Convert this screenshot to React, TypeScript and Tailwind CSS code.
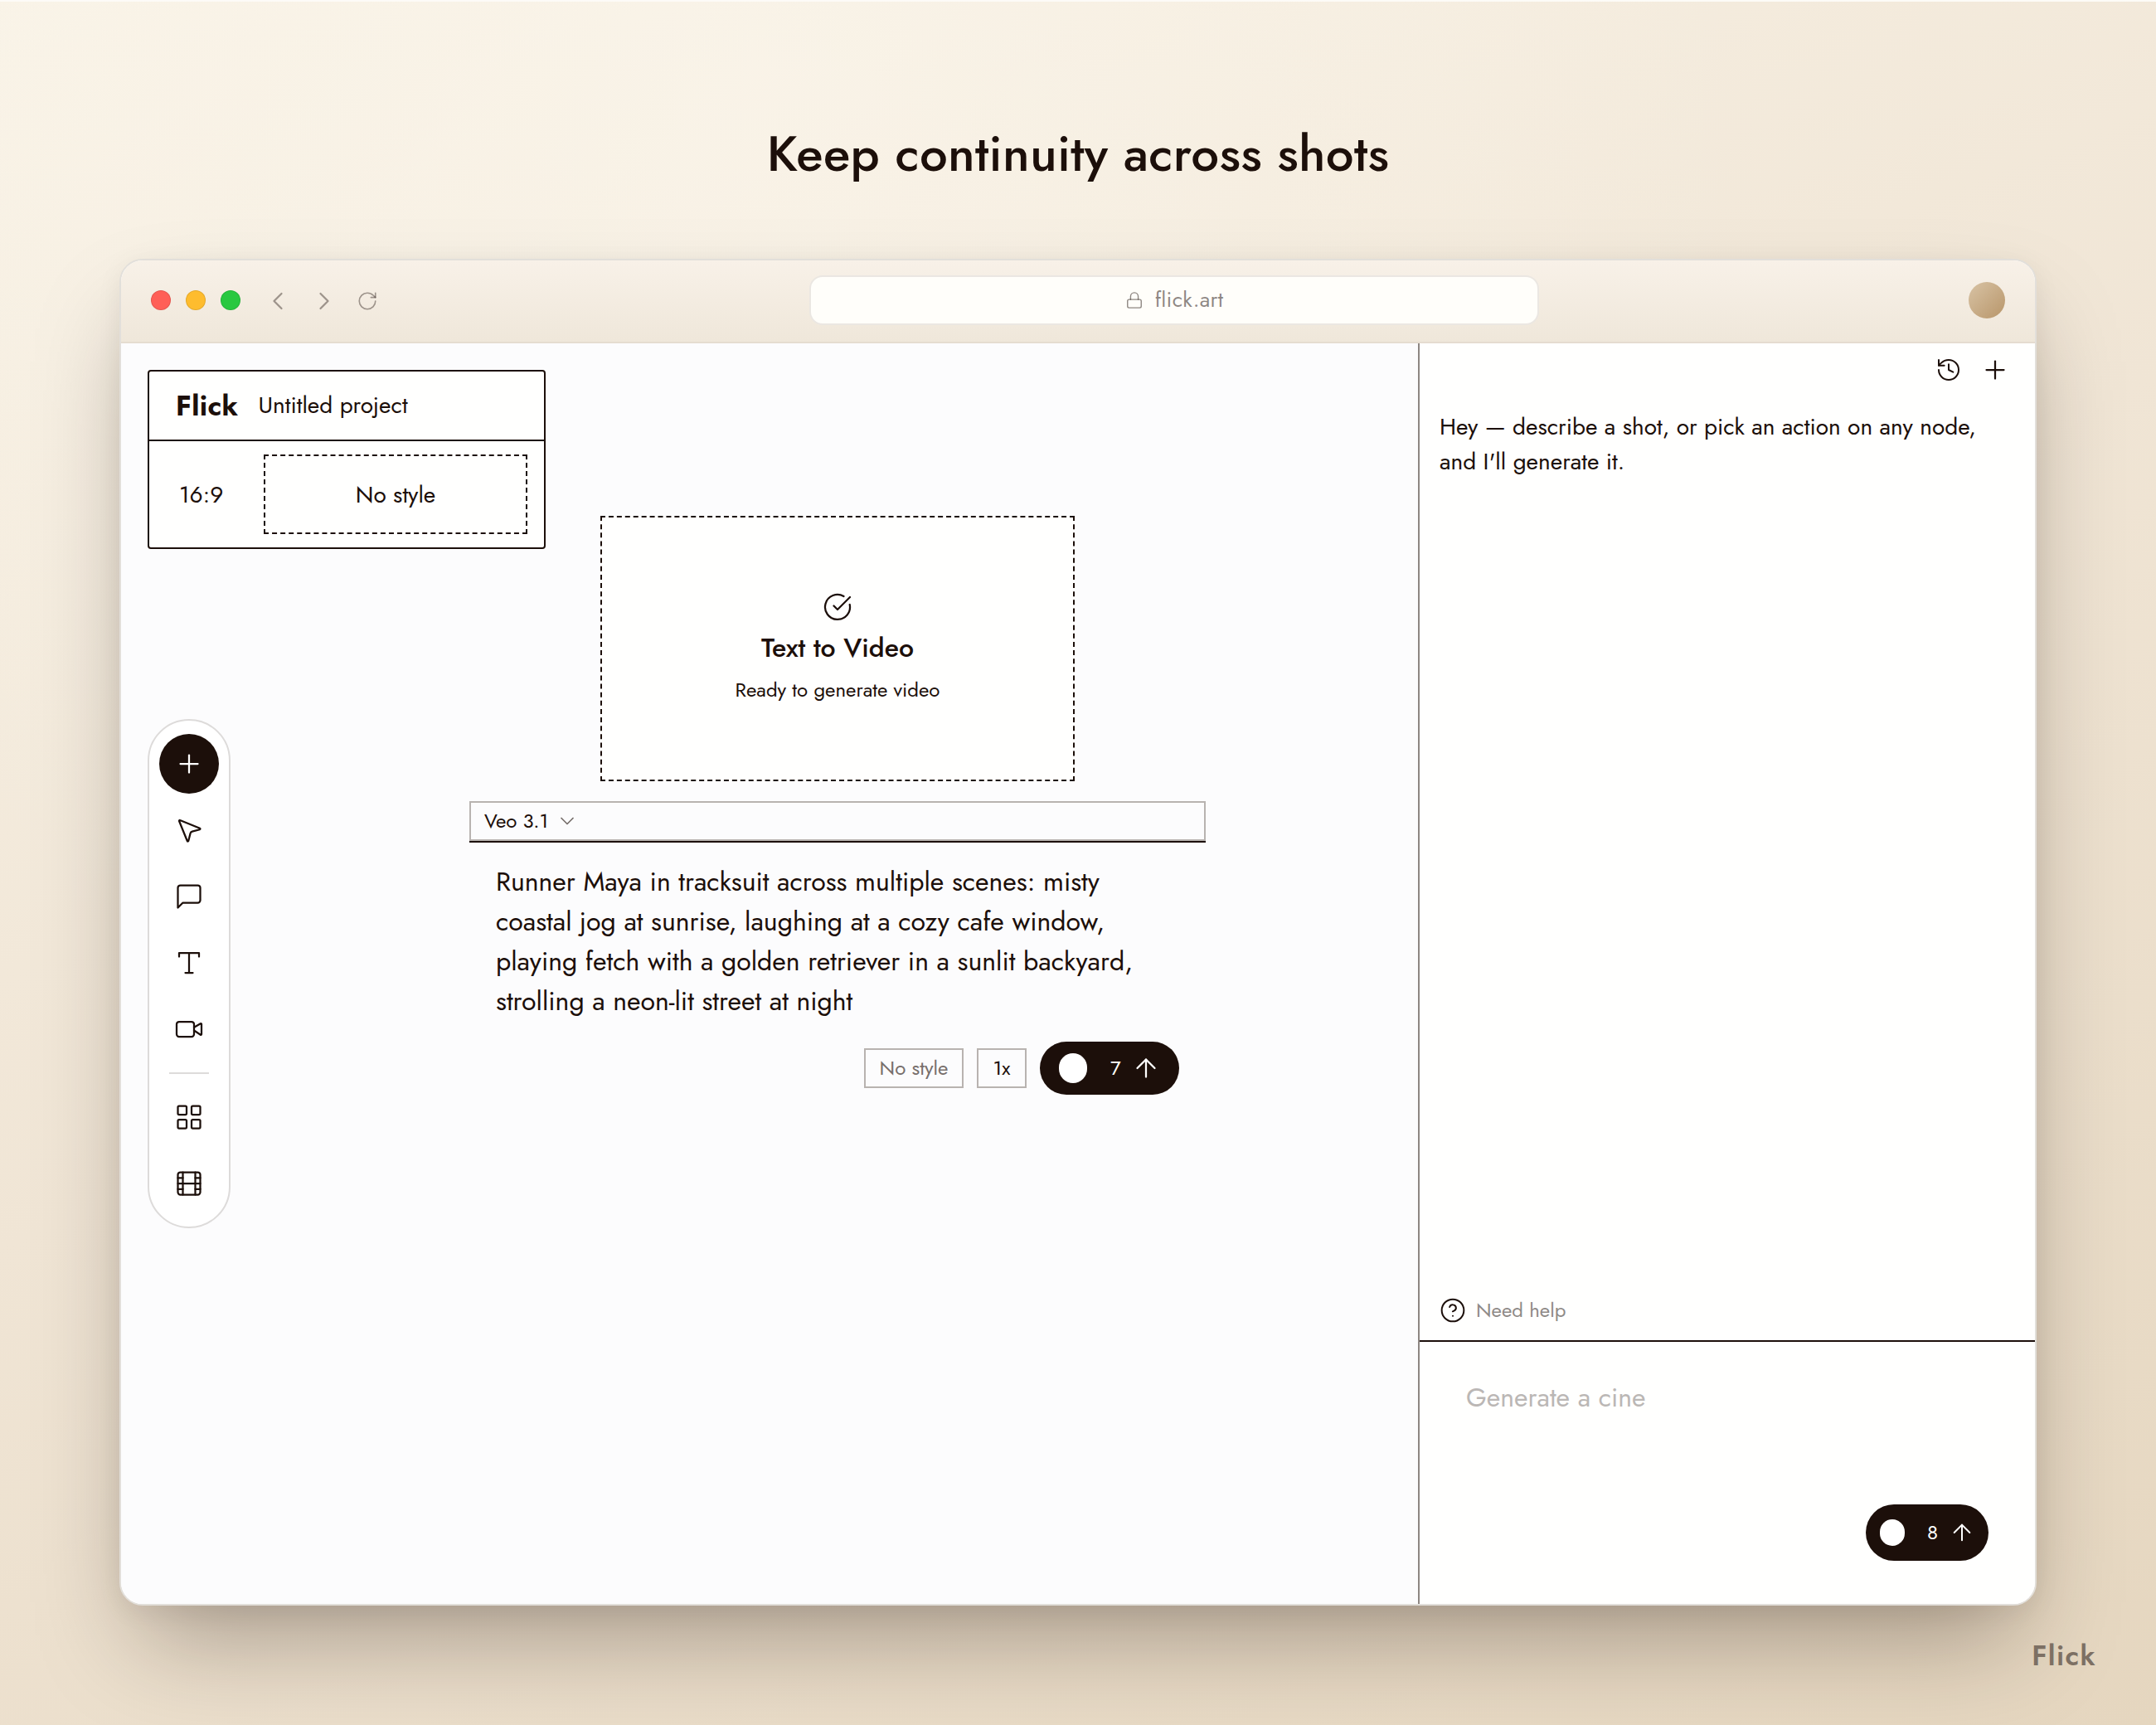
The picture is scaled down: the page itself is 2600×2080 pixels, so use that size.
import { clsx } from 'clsx'
import {
  ArrowUp,
  ChevronDown,
  ChevronLeft,
  ChevronRight,
  CircleCheckBig,
  CircleQuestionMark,
  Film,
  History,
  LayoutGrid,
  Lock,
  MousePointer2,
  Plus,
  RotateCw,
  Video,
} from 'lucide-react'

type IconProps = { size: number; strokeWidth: number }

const StrokeIcon = ({ size, strokeWidth, d }: IconProps & { d: string }) => (
  <svg
    width={size}
    height={size}
    viewBox="0 0 24 24"
    fill="none"
    stroke="currentColor"
    strokeWidth={strokeWidth}
    strokeLinecap="round"
    strokeLinejoin="round"
  >
    <path d={d} />
  </svg>
)

const CommentIcon = (props: IconProps) => (
  <StrokeIcon {...props} d="M21 15a2 2 0 0 1-2 2H7l-4 4V5a2 2 0 0 1 2-2h14a2 2 0 0 1 2 2z" />
)

const TextIcon = (props: IconProps) => <StrokeIcon {...props} d="M4 7V4h16v3M9 20h6M12 4v16" />

const tools = [
  { name: 'select', Icon: MousePointer2 },
  { name: 'comment', Icon: CommentIcon },
  { name: 'text', Icon: TextIcon },
  { name: 'video', Icon: Video },
]

const libraryTools = [
  { name: 'assets', Icon: LayoutGrid },
  { name: 'timeline', Icon: Film },
]

export default function App() {
  return (
    <div className="flex h-[2080px] w-[2600px] flex-col overflow-hidden border-t-2 border-[#fdfbf7] bg-[radial-gradient(ellipse_at_35%_5%,#fbf6ec90_0%,#fbf6ec00_50%),linear-gradient(158deg,#f9f3e7_0%,#f0e5d5_48%,#e5d6bf_100%)] font-[Jost,Lato,sans-serif] text-[#1c0f0a]">
      <h1 className="flex h-[310px] shrink-0 items-center justify-center pt-[57px] text-[60px] font-medium tracking-[0.3px]">
        Keep continuity across shots
      </h1>
      <div className="mx-36 flex h-[1624px] shrink-0 flex-col overflow-hidden rounded-[28px] border-2 border-[#e2dfda] bg-white shadow-[0_60px_120px_-24px_rgba(28,15,10,0.34),0_8px_32px_rgba(28,15,10,0.06)]">
        <TitleBar />
        <div className="flex min-h-0 flex-1">
          <Canvas />
          <ChatPanel />
        </div>
      </div>
      <div className="flex justify-end pt-[35px] pr-[72px] text-[34px] font-semibold tracking-[0.04em] text-[#7d7064]">
        Flick
      </div>
    </div>
  )
}

const TitleBar = () => {
  return (
    <div className="flex h-[100px] shrink-0 items-center border-b-2 border-[#e5dcd0] bg-linear-to-b from-[#f8f1e8] to-[#efe7da] px-9 pb-0.5">
      <div className="flex gap-[18px]">
        <span className="size-6 rounded-full border border-black/10 bg-[#ff5f57]" />
        <span className="size-6 rounded-full border border-black/10 bg-[#febc2e]" />
        <span className="size-6 rounded-full border border-black/10 bg-[#28c840]" />
      </div>
      <div className="ml-[27px] flex items-center pt-0.5 text-[#1c0f0a]/40">
        <ChevronLeft size={36} strokeWidth={1.5} />
        <ChevronRight size={36} strokeWidth={1.5} className="ml-5" />
        <RotateCw size={26} strokeWidth={1.5} className="ml-[21px]" />
      </div>
      <div className="ml-[520px] flex h-[60px] w-[880px] items-center justify-center gap-3.5 rounded-2xl border-2 border-[#ebe7e2] bg-[#fffefa] text-[26px] tracking-[0.01em] text-[#1c0f0a]/50">
        <Lock size={22} strokeWidth={1.5} />
        <span className="pb-0.5">flick.art</span>
      </div>
      <span className="ml-auto size-11 rounded-full bg-linear-to-br from-[#d8c3a5] to-[#b8966a]" />
    </div>
  )
}

const Canvas = () => {
  return (
    <div className="relative w-[1564px] shrink-0 bg-[#fcfcfd]">
      <ProjectCard />
      <Toolbar />
      <VideoNode />
    </div>
  )
}

const ProjectCard = () => {
  return (
    <div className="absolute top-8 left-8 flex h-[216px] w-[480px] flex-col rounded border-2 border-[#1c0f0a] bg-[#fffffe]">
      <div className="flex h-[84px] items-center gap-6 border-b-2 border-[#1c0f0a] px-8">
        <span className="text-[34px] font-bold tracking-[0.01em]">Flick</span>
        <span className="text-[28px]">Untitled project</span>
      </div>
      <div className="flex flex-1 items-center pr-5 pl-9">
        <span className="w-[102px] pt-0.5 text-[28px]">16:9</span>
        <div className="flex h-24 flex-1 items-center justify-center border-2 border-dashed border-[#1c0f0a] pt-0.5 text-[28px]">
          No style
        </div>
      </div>
    </div>
  )
}

const Toolbar = () => {
  return (
    <div className="absolute top-[453px] left-8 flex w-[100px] flex-col items-center gap-2 rounded-full border-2 border-[#dddbda] bg-white py-4">
      <button type="button" className="flex size-[72px] items-center justify-center rounded-full bg-[#1c0f0a] text-white">
        <Plus size={36} strokeWidth={1.5} />
      </button>
      {tools.map(({ name, Icon }) => (
        <button key={name} type="button" aria-label={name} className="flex size-[72px] items-center justify-center">
          <Icon size={36} strokeWidth={1.5} />
        </button>
      ))}
      <div className="my-2 h-0.5 w-12 bg-[#dddbda]" />
      {libraryTools.map(({ name, Icon }) => (
        <button key={name} type="button" aria-label={name} className="flex size-[72px] items-center justify-center">
          <Icon size={36} strokeWidth={1.5} />
        </button>
      ))}
    </div>
  )
}

const VideoNode = () => {
  return (
    <div className="absolute top-52 left-[420px] flex w-[888px] flex-col items-center">
      <div className="flex h-80 w-[572px] flex-col items-center border-2 border-dashed border-[#1c0f0a] bg-[#fffffe] pt-[90px]">
        <CircleCheckBig size={36} strokeWidth={1.5} />
        <div className="mt-[7px] text-[32px] leading-[48px] font-medium">Text to Video</div>
        <div className="mt-[9px] text-2xl leading-9">Ready to generate video</div>
      </div>
      <div className="mt-6 w-full border-b-2 border-[#1c0f0a]">
        <div className="flex h-12 items-center gap-[9px] border-2 border-[#b8b3b0] px-4 text-2xl">
          Veo 3.1
          <ChevronDown size={28} strokeWidth={1.5} className="text-[#776f6c]" />
        </div>
      </div>
      <p className="mt-[23px] w-full px-8 text-[32px] leading-[48px]">
        Runner Maya in tracksuit across multiple scenes: misty
        <br />
        coastal jog at sunrise, laughing at a cozy cafe window,
        <br />
        playing fetch with a golden retriever in a sunlit backyard,
        <br />
        strolling a neon-lit street at night
      </p>
      <div className="mt-[25px] flex w-full items-center justify-end gap-4 pr-8 text-2xl">
        <span className="flex h-12 w-[120px] items-center justify-center border-2 border-[#b8b3b0] text-[#776f6c]">
          No style
        </span>
        <span className="flex h-12 w-[60px] items-center justify-center border-2 border-[#b8b3b0]">1x</span>
        <CreditPill credits={7} large />
      </div>
    </div>
  )
}

const CreditPill = ({ credits, large }: { credits: number; large?: boolean }) => {
  return (
    <div
      className={clsx(
        'flex items-center rounded-full bg-[#1c0f0a] text-2xl text-white',
        large ? 'h-16 w-[168px] pl-[23px]' : 'h-[68px] w-[148px] pl-[17px]'
      )}
    >
      <span className={clsx('rounded-full bg-white', large ? 'h-9 w-[34px]' : 'h-8 w-[30px]')} />
      <span className={large ? 'ml-7' : 'ml-[27px]'}>{credits}</span>
      <ArrowUp size={large ? 36 : 32} strokeWidth={1.5} className={large ? 'ml-3' : 'ml-[13px]'} />
    </div>
  )
}

const ChatPanel = () => {
  return (
    <div className="flex flex-1 flex-col border-l-2 border-[#8d8682] bg-[#fffffe]">
      <div className="flex h-16 items-center justify-end gap-[22px] pr-[30px]">
        <History size={32} strokeWidth={1.5} />
        <Plus size={36} strokeWidth={1.5} />
      </div>
      <p className="px-6 pt-4 text-[28px] leading-[42px]">
        Hey — describe a shot, or pick an action on any node,
        <br />
        and I'll generate it.
      </p>
      <div className="mt-auto flex items-center gap-3 px-6 pb-5 text-2xl text-[#8f8a87]">
        <CircleQuestionMark size={32} strokeWidth={1.5} className="text-[#1c0f0a]" />
        Need help
      </div>
      <div className="flex h-[318px] flex-col border-t-2 border-[#1c0f0a] px-14 pt-[43px]">
        <span className="text-[32px] leading-[48px] text-[#bbb7b5]">Generate a cine</span>
        <div className="mt-[105px] flex justify-end">
          <CreditPill credits={8} />
        </div>
      </div>
    </div>
  )
}
